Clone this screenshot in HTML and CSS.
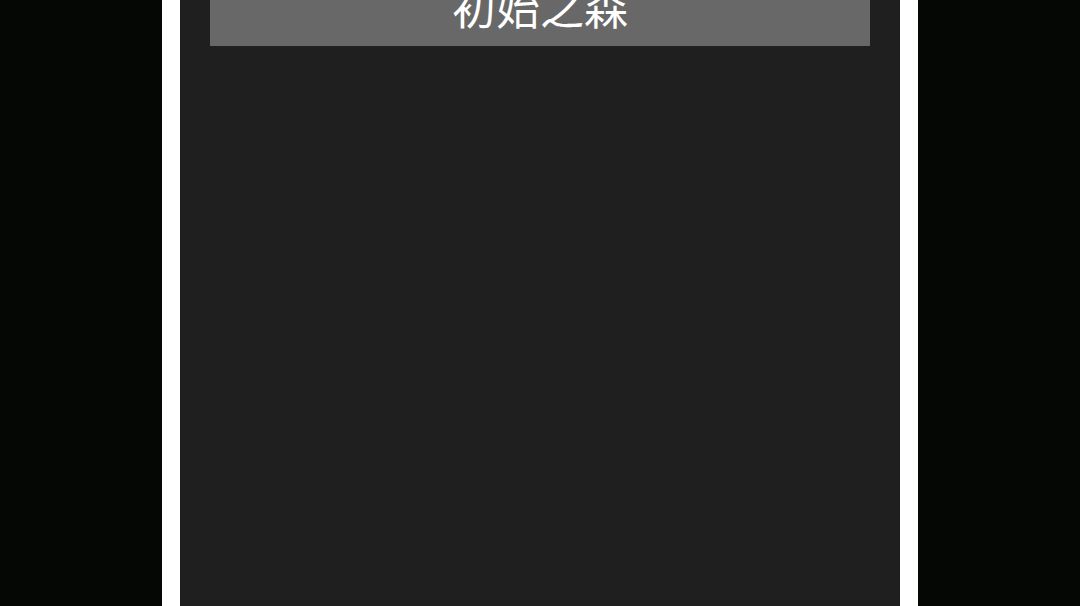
FILE: index.html
```html
<!DOCTYPE html>
<html lang="zh">
<head>
<meta charset="utf-8">
<title>初始之森</title>
<link rel="stylesheet" href="styles.css">
</head>
<body>
<div class="stage">
  <div class="frame">
    <div class="screen">
      <div class="title-bar"><h1 class="title">初始之森</h1></div>
    </div>
  </div>
</div>
</body>
</html>
```
FILE: styles.css
```css
html, body {
  margin: 0;
  padding: 0;
  height: 100%;
  background: #050705;
}
.stage {
  display: flex;
  justify-content: center;
  height: 606px;
  overflow: hidden;
}
.frame {
  width: 720px;
  padding: 0 18px;
  background: #ffffff;
  display: flex;
}
.screen {
  flex: 1;
  background: #1f1f1f;
  padding: 0 30px;
}
.title-bar {
  height: 46px;
  background: #686868;
  display: flex;
  align-items: flex-end;
  justify-content: center;
  overflow: hidden;
  padding-bottom: 18px;
  box-sizing: border-box;
}
.title {
  margin: 0;
  font-family: "Noto Sans CJK SC", "Noto Sans CJK JP", sans-serif;
  font-weight: 400;
  font-size: 44px;
  line-height: 44px;
  color: #ffffff;
  white-space: nowrap;
}
```
